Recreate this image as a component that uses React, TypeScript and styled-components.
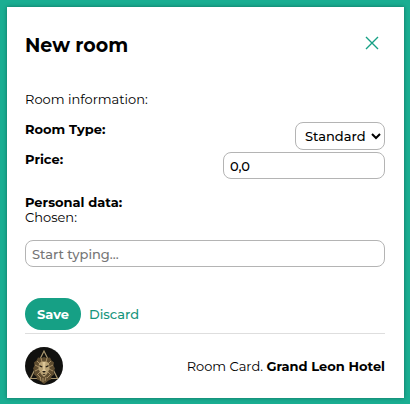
import React from "react";
import styled, { createGlobalStyle } from "styled-components";

const GlobalStyle = createGlobalStyle`
  *, *::before, *::after { box-sizing: border-box; }
  body {
    margin: 0;
    background: #1aae92;
    color: #000;
    font-family: Montserrat, Inter, sans-serif;
    font-size: 13px;
    line-height: 15px;
  }
  button, input, select { font: inherit; color: inherit; }
`;

const Page = styled.main`
  display: flex;
  padding: 7px 6px 6px 7px;
`;

const Card = styled.form`
  flex: 1;
  display: flex;
  flex-direction: column;
  padding: 24px 19px 13px 18px;
  background: #fff;
  box-shadow: 0 0 4px rgba(0, 0, 0, 0.35);
`;

const Header = styled.header`
  display: flex;
  align-items: flex-start;
  justify-content: space-between;
  margin-bottom: 31px;
`;

const Title = styled.h1`
  margin: 0;
  font-size: 19px;
  line-height: 30px;
  font-weight: 700;
`;

const CloseButton = styled.button`
  display: flex;
  align-items: center;
  justify-content: center;
  width: 26px;
  height: 24px;
  padding: 0;
  border: 0;
  background: none;
  color: #16a085;
  cursor: pointer;
`;

const Text = styled.p`
  margin: 0;
`;

const Fields = styled.section`
  display: flex;
  flex-direction: column;
  gap: 2px;
  margin: 15px 0 16px;
`;

const Row = styled.div`
  display: flex;
  align-items: flex-start;
  justify-content: space-between;
`;

const Label = styled.label`
  font-weight: 700;
`;

const Select = styled.select`
  width: 90px;
  height: 28px;
  padding: 0 0 0 5px;
  border: 1px solid #b4b4b4;
  border-radius: 8px;
  background: #fff;
  font-weight: 500;
`;

const TextInput = styled.input<{ $width: string }>`
  width: ${(p) => p.$width};
  height: 27px;
  padding: 0 6px;
  border: 1px solid #b4b4b4;
  border-radius: 8px;
  background: #fff;
  font-weight: 500;
  &::placeholder { color: #757575; opacity: 1; }
`;

const Person = styled.section`
  display: flex;
  flex-direction: column;
`;

const Search = styled.div`
  display: flex;
  margin-top: 15px;
`;

const Actions = styled.div`
  display: flex;
  align-items: center;
  gap: 8px;
  margin-top: 31px;
  padding-bottom: 3px;
  border-bottom: 1px solid #dedede;
`;

const SaveButton = styled.button`
  height: 32px;
  padding: 0 12px;
  border: 0;
  border-radius: 16px;
  background: #16a085;
  color: #fff;
  font-weight: 700;
  cursor: pointer;
`;

const DiscardButton = styled.button`
  padding: 0;
  border: 0;
  background: none;
  color: #16957c;
  font-weight: 500;
  cursor: pointer;
`;

const Footer = styled.footer`
  display: flex;
  align-items: center;
  justify-content: space-between;
  padding-top: 13px;
`;

const CloseIcon = () => (
  <svg width="14" height="14" viewBox="0 0 14 14" fill="none" stroke="currentColor" strokeWidth="1.4" aria-hidden="true">
    <path d="M1 1 13 13M13 1 1 13" />
  </svg>
);

const LionLogo = () => (
  <svg width="38" height="38" viewBox="0 0 38 38" role="img" aria-label="Grand Leon Hotel">
    <circle cx="19" cy="19" r="19" fill="#11110f" />
    <path d="M19 4 5.500 31.500h27z" fill="none" stroke="#a8966e" strokeWidth="1.2" />
    <path
      d="m19 10 2.500 1 3.500-.5 1.500 3 2.500 2-.5 3 1.500 3-1.500 3 .5 3-2.500 2-.5 3-2.500 1L19 37l-4.500-3.500-2.500-1-.5-3-2.500-2 .5-3-1.500-3 1.500-3-.5-3 2.500-2 1.500-3 3.500.5z"
      fill="#5f4d30"
    />
    <path
      d="m12 14 3 3m-5 1 4 2m-4 4 4-2m-2 6 3-3m11-11-3 3m5 1-4 2m4 4-4-2m2 6-3-3M16 11l1 4m5-4-1 4m-8 13 3 3m9-3-3 3m-7-1 1 4m5-4-1 4m-2-3v4"
      fill="none"
      stroke="#a89066"
      strokeWidth="1"
    />
    <path d="m14 16 3-1.500h4l3 1.500.5 6-2.500 5-3 3-3-3-2.500-5z" fill="#b8a174" />
    <path d="m17.500 15 .7 7-1.700 2.500 2.500 1 2.500-1-1.700-2.500.7-7z" fill="#dcc698" />
    <path d="m14.500 18 3 1.500-.5 1-2.500-1zm9 0-3 1.500.5 1 2.500-1zM17 24h4l-2 2zm.2 3h3.600L19 28z" fill="#231c12" />
  </svg>
);

export default function App() {
  return (
    <>
      <GlobalStyle />
      <Page>
        <Card onSubmit={(e) => e.preventDefault()}>
          <Header>
            <Title>New room</Title>
            <CloseButton type="button" aria-label="Close">
              <CloseIcon />
            </CloseButton>
          </Header>
          <Text>Room information:</Text>
          <Fields>
            <Row>
              <Label htmlFor="room-type">Room Type:</Label>
              <Select id="room-type" defaultValue="Standard">
                <option>Standard</option>
              </Select>
            </Row>
            <Row>
              <Label htmlFor="price">Price:</Label>
              <TextInput id="price" $width="45%" defaultValue="0,0" />
            </Row>
          </Fields>
          <Person>
            <Label htmlFor="person">Personal data:</Label>
            <Text>Chosen:</Text>
            <Search>
              <TextInput id="person" $width="100%" placeholder="Start typing..." />
            </Search>
          </Person>
          <Actions>
            <SaveButton type="submit">Save</SaveButton>
            <DiscardButton type="button">Discard</DiscardButton>
          </Actions>
          <Footer>
            <LionLogo />
            <Text>
              Room Card. <b>Grand Leon Hotel</b>
            </Text>
          </Footer>
        </Card>
      </Page>
    </>
  );
}
